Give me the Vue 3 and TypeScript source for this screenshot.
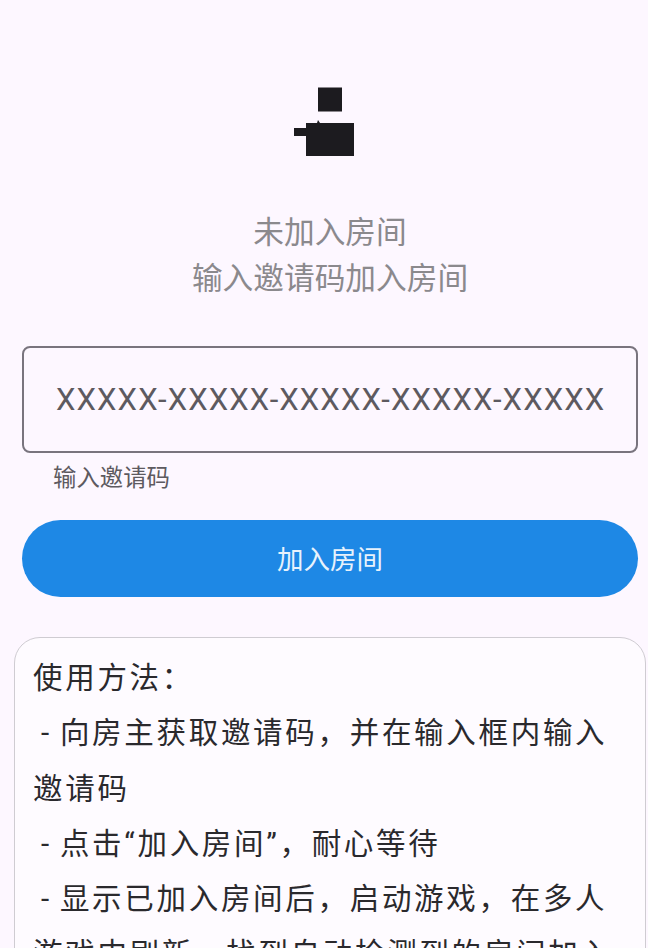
<script setup lang="ts">
const usage: string[] = [
  '使用方法：',
  ' - 向房主获取邀请码，并在输入框内输入邀请码',
  ' - 点击“加入房间”，耐心等待',
  ' - 显示已加入房间后，启动游戏，在多人游戏中刷新，找到自动检测到的房间加入',
]
</script>

<template>
  <div class="page">
    <svg class="status-icon" width="62" height="70" viewBox="0 0 62 70">
      <path d="M25 .5h24v24H25zM13 36h11l1-3 2 3h34v33H13V49H1v-8h12z" fill="#1c1b1f" />
    </svg>
    <p class="status-text">未加入房间<br />输入邀请码加入房间</p>

    <div class="field">
      <input class="code-input" type="text" placeholder="XXXXX-XXXXX-XXXXX-XXXXX-XXXXX" />
      <span class="field-hint">输入邀请码</span>
    </div>

    <button class="join-btn" type="button">加入房间</button>

    <div class="usage-card">
      <p v-for="(line, index) in usage" :key="index" class="usage-line">{{ line }}</p>
    </div>
  </div>
</template>

<style scoped>
.page {
  height: 948px;
  overflow: hidden;
  box-sizing: border-box;
  background: #fdf7ff;
  padding: 87px 0 0 12px;
  display: flex;
  flex-direction: column;
  align-items: center;
  font-family: Roboto, "Noto Sans CJK SC", sans-serif;
}

.status-icon {
  display: block;
  flex: none;
  margin-left: -12px;
}

.status-text {
  margin: 53px 0 0;
  font-size: 30.7px;
  line-height: 46px;
  text-align: center;
  color: #8b898d;
}

.field {
  flex: none;
  margin-top: 44px;
  width: 616px;
  display: flex;
  flex-direction: column;
}

.code-input {
  box-sizing: border-box;
  width: 100%;
  height: 107px;
  padding: 0 32px;
  border: 2px solid #79747e;
  border-radius: 8px;
  background: transparent;
  outline: none;
  font-family: inherit;
  font-size: 31px;
  letter-spacing: 1.1px;
  color: #1c1b1f;
}

.code-input::placeholder {
  color: #5d5a60;
  opacity: 1;
}

.field-hint {
  margin: 8px 0 0 31px;
  font-size: 23.4px;
  line-height: 34px;
  color: #5d5a60;
}

.join-btn {
  flex: none;
  margin-top: 25px;
  width: 616px;
  height: 77px;
  padding: 0 0 3px;
  border: none;
  border-radius: 39px;
  background: #1e88e5;
  color: #e8f2fc;
  font-family: inherit;
  font-size: 26.5px;
}

.usage-card {
  flex: none;
  box-sizing: border-box;
  margin-top: 40px;
  width: 632px;
  padding: 13px 16px 13px 18px;
  border: 1.5px solid #cfccd2;
  border-radius: 26px;
  background: #fefbff;
}

.usage-line {
  margin: 0;
  font-size: 29.5px;
  line-height: 55.25px;
  letter-spacing: 2.7px;
  word-spacing: -2px;
  color: #2a292d;
  white-space: pre-wrap;
}
</style>

<style>
html,
body {
  margin: 0;
  overflow: hidden;
}
</style>
